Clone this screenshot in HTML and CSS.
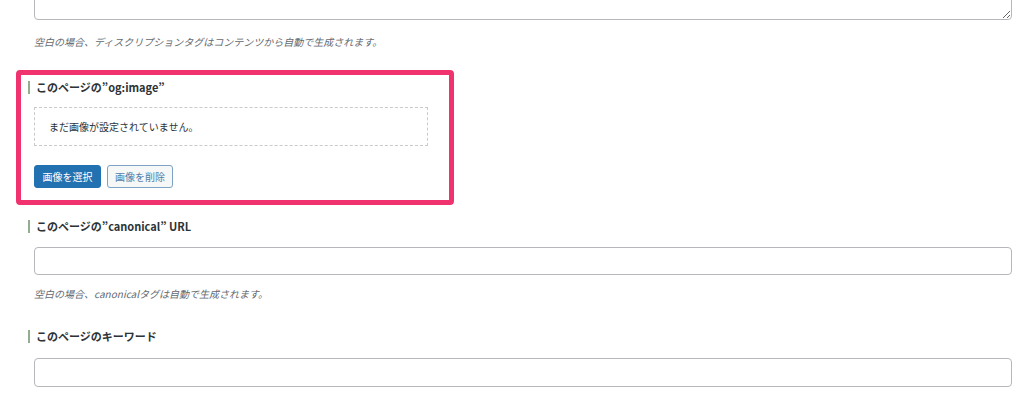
FILE: index.html
```html
<!DOCTYPE html>
<html lang="ja">
<head>
    <meta charset="UTF-8">
    <meta name="viewport" content="width=device-width, initial-scale=1.0">
    <title>SEO設定</title>
    <link rel="stylesheet" href="styles.css">
</head>
<body>
    <main class="seo-box">
        <!-- ディスクリプション -->
        <textarea class="desc-area"></textarea>
        <p class="help">空白の場合、ディスクリプションタグはコンテンツから自動で生成されます。</p>

        <!-- og:image -->
        <section class="field highlight">
            <h3 class="field-title">このページの”og:image”</h3>
            <div class="image-preview">まだ画像が設定されていません。</div>
            <div class="buttons">
                <button type="button" class="btn btn-primary">画像を選択</button>
                <button type="button" class="btn btn-secondary">画像を削除</button>
            </div>
        </section>

        <!-- canonical -->
        <section class="field">
            <h3 class="field-title title-canonical">このページの”canonical” URL</h3>
            <input type="text" class="text-input input-canonical">
            <p class="help help-canonical">空白の場合、canonicalタグは自動で生成されます。</p>
        </section>

        <!-- キーワード -->
        <section class="field">
            <h3 class="field-title title-keyword">このページのキーワード</h3>
            <input type="text" class="text-input input-keyword">
        </section>
    </main>
</body>
</html>
```

FILE: styles.css
```css
/* General Styles */
body {
    background-color: #fff;
    color: #1d2327;
    font-family: "Noto Sans CJK JP", "Noto Sans", sans-serif;
    margin: 0;
    padding: 0;
    overflow: hidden;
}

.seo-box {
    padding: 0 12px 0 34px;
}

.desc-area {
    display: block;
    width: 100%;
    height: 60px;
    margin: -40px 0 0;
    box-sizing: border-box;
    border: 1px solid #b5b7ba;
    border-radius: 4px;
    background-color: #fff;
}

.help {
    margin: 15px 0 0;
    font-size: 10px;
    line-height: 14px;
    font-style: italic;
    color: #646970;
}

/* og:image (強調枠) */
.highlight {
    margin: 21px 0 0 -18px;
    width: 438px;
    box-sizing: border-box;
    border: 5px solid #f0336f;
    border-radius: 4px;
    padding: 0 0 12px 13px;
}

.field-title {
    margin: 6px 0 0 -6px;
    padding-left: 6px;
    border-left: 2px solid #93ad90;
    font-size: 11px;
    line-height: 13px;
    font-weight: bold;
    color: #2c3338;
}

.image-preview {
    margin-top: 13px;
    width: 394px;
    height: 39px;
    box-sizing: border-box;
    border: 1px dashed #c8cacc;
    padding-left: 14px;
    font-size: 10px;
    line-height: 37px;
    color: #2c3338;
}

.buttons {
    display: flex;
    gap: 6px;
    margin-top: 19px;
}

.btn {
    height: 23px;
    padding: 0;
    border-radius: 3px;
    font-family: inherit;
    font-size: 10px;
    cursor: pointer;
}

.btn-primary {
    width: 67px;
    background-color: #2271b1;
    border: 1px solid #2271b1;
    color: #fff;
}

.btn-secondary {
    width: 66px;
    background-color: #f6f7f7;
    border: 1px solid #7ea3c4;
    color: #4f7fa8;
}

/* canonical / キーワード */
.title-canonical {
    margin-top: 15px;
}

.title-keyword {
    margin-top: 29px;
}

.text-input {
    display: block;
    width: 100%;
    box-sizing: border-box;
    border: 1px solid #b5b7ba;
    border-radius: 4px;
    background-color: #fff;
}

.input-canonical {
    margin-top: 14px;
    height: 28px;
}

.help-canonical {
    margin-top: 12px;
}

.input-keyword {
    margin-top: 15px;
    height: 29px;
}
```
